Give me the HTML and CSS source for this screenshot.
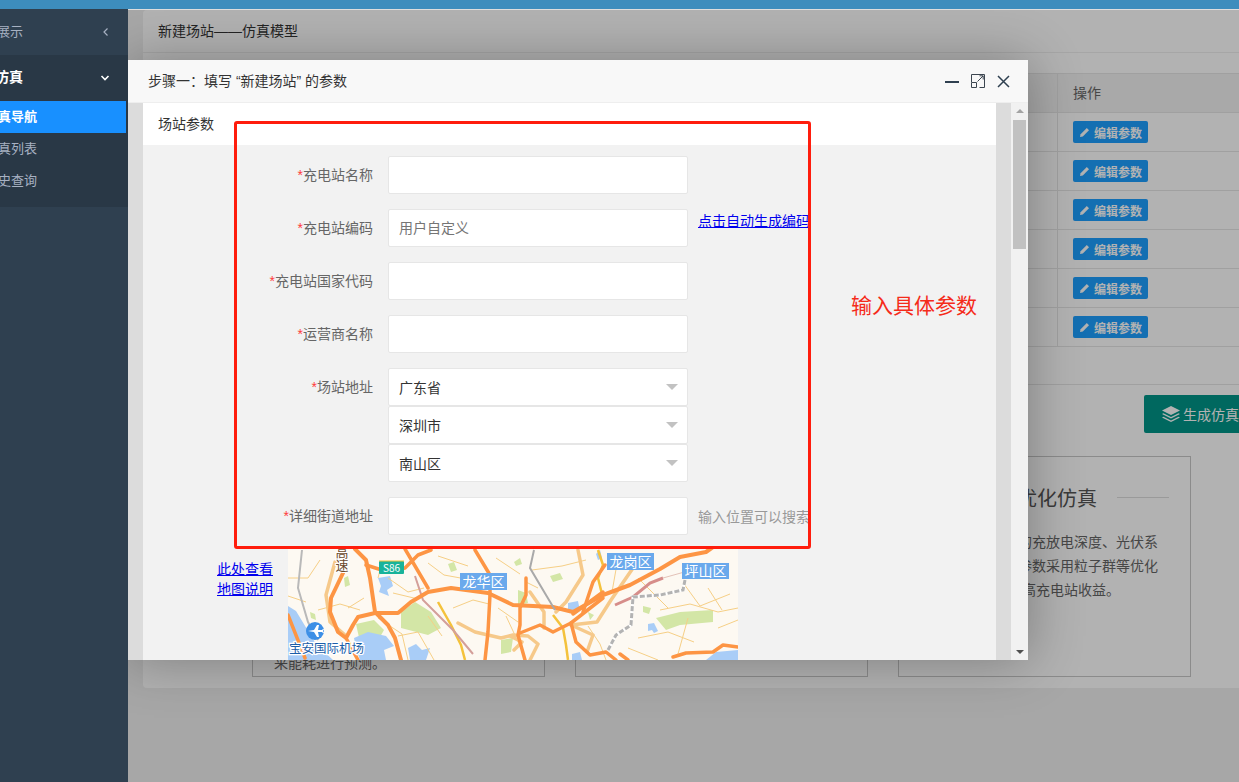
FILE: index.html
```html
<!DOCTYPE html>
<html lang="zh">
<head>
<meta charset="utf-8">
<title>新建场站——仿真模型</title>
<link rel="stylesheet" href="styles.css">
</head>
<body>
<div class="topbar"></div>
<div class="app">
  <aside class="sidebar">
    <div class="nav-item"><span class="nav-label">数据展示</span>
      <svg class="chev" width="8" height="10" viewBox="0 0 8 10"><path d="M5.500 1.500 2 5l3.500 3.500" fill="none" stroke="#a7b1c2" stroke-width="1.200"/></svg>
    </div>
    <div class="nav-group">
      <div class="nav-item nav-open"><span class="nav-label">优化仿真</span>
        <svg class="chev" width="10" height="8" viewBox="0 0 10 8"><path d="M1.500 2 5 5.500 8.500 2" fill="none" stroke="#fff" stroke-width="1.600"/></svg>
      </div>
      <div class="sub-item sub-active"><span class="sub-label">仿真导航</span></div>
      <div class="sub-item"><span class="sub-label">仿真列表</span></div>
      <div class="sub-item"><span class="sub-label">历史查询</span></div>
    </div>
  </aside>

  <main class="main">
    <section class="panel">
      <header class="panel-head">新建场站——仿真模型</header>
      <div class="table">
        <div class="row row-head"><div class="cell-blank"></div><div class="cell-op"><span class="op-title">操作</span></div></div>
        <div class="row"><div class="cell-blank"></div><div class="cell-op"><a class="btn-edit"><svg width="11" height="11" viewBox="0 0 11 11"><path d="M1 10l.6-2.800L7.800 1l2.200 2.200L3.800 9.400z"/></svg>编辑参数</a></div></div>
        <div class="row"><div class="cell-blank"></div><div class="cell-op"><a class="btn-edit"><svg width="11" height="11" viewBox="0 0 11 11"><path d="M1 10l.6-2.800L7.800 1l2.200 2.200L3.800 9.400z"/></svg>编辑参数</a></div></div>
        <div class="row"><div class="cell-blank"></div><div class="cell-op"><a class="btn-edit"><svg width="11" height="11" viewBox="0 0 11 11"><path d="M1 10l.6-2.800L7.800 1l2.200 2.200L3.800 9.400z"/></svg>编辑参数</a></div></div>
        <div class="row"><div class="cell-blank"></div><div class="cell-op"><a class="btn-edit"><svg width="11" height="11" viewBox="0 0 11 11"><path d="M1 10l.6-2.800L7.800 1l2.200 2.200L3.800 9.400z"/></svg>编辑参数</a></div></div>
        <div class="row"><div class="cell-blank"></div><div class="cell-op"><a class="btn-edit"><svg width="11" height="11" viewBox="0 0 11 11"><path d="M1 10l.6-2.800L7.800 1l2.200 2.200L3.800 9.400z"/></svg>编辑参数</a></div></div>
        <div class="row"><div class="cell-blank"></div><div class="cell-op"><a class="btn-edit"><svg width="11" height="11" viewBox="0 0 11 11"><path d="M1 10l.6-2.800L7.800 1l2.200 2.200L3.800 9.400z"/></svg>编辑参数</a></div></div>
      </div>
      <div class="table-foot"></div>
      <div class="toolbar">
        <a class="btn-gen">
          <svg width="20" height="18" viewBox="0 0 20 18"><path d="M10 1 19 5.500 10 10 1 5.500z"/><path d="M2.500 8.200 10 12l7.500-3.800L19 9l-9 4.500L1 9z"/><path d="M2.500 11.700 10 15.500l7.500-3.800L19 12.500 10 17l-9-4.500z"/></svg>
          生成仿真
        </a>
      </div>
      <div class="cards">
        <article class="card card-end"><p class="card-line">来能耗进行预测。</p></article>
        <article class="card"></article>
        <article class="card">
          <div class="card-title"><h3>优化仿真</h3><span class="title-rule"></span></div>
          <p class="card-line">可优化储能系统的充放电深度、光伏系</p>
          <p class="card-line">数、储能容量等参数采用粒子群等优化</p>
          <p class="card-line">算法进行求解,提高充电站收益。</p>
        </article>
      </div>
    </section>
    <div class="shade"></div>
  </main>
</div>

<div class="modal">
  <header class="modal-head">
    <span class="modal-title">步骤一&#xFF1A;填写 “新建场站” 的参数</span>
    <div class="modal-tools">
      <svg width="14" height="14" viewBox="0 0 14 14"><path d="M0 8h14" stroke="#2f4050" stroke-width="2"/></svg>
      <svg width="14" height="14" viewBox="0 0 14 14" fill="none" stroke="#3c4650"><path d="M6 .5h7.500V13.500H8.500M.5 8V.5H6" /><path d="M.5 8.500h5v5h-5zM6.500 7.500 12 2M8.500 1.800h3.700v3.700"/></svg>
      <svg width="13" height="13" viewBox="0 0 13 13"><path d="M1 1l11 11M12 1 1 12" stroke="#2f4050" stroke-width="1.500"/></svg>
    </div>
  </header>
  <div class="modal-body">
    <div class="modal-scroll">
      <div class="sheet">
        <div class="tab-band">场站参数</div>
        <form class="form">
          <div class="form-row"><label class="form-label"><i>*</i>充电站名称</label><input class="field" type="text"></div>
          <div class="form-row"><label class="form-label"><i>*</i>充电站编码</label><input class="field" type="text" placeholder="用户自定义"><a class="link link-top" href="#">点击自动生成编码</a></div>
          <div class="form-row"><label class="form-label"><i>*</i>充电站国家代码</label><input class="field" type="text"></div>
          <div class="form-row"><label class="form-label"><i>*</i>运营商名称</label><input class="field" type="text"></div>
          <div class="form-row form-row-top">
            <label class="form-label"><i>*</i>场站地址</label>
            <div class="selects">
              <div class="select">广东省<span class="caret"></span></div>
              <div class="select">深圳市<span class="caret"></span></div>
              <div class="select">南山区<span class="caret"></span></div>
            </div>
          </div>
          <div class="form-row form-row-last"><label class="form-label"><i>*</i>详细街道地址</label><input class="field" type="text"><span class="hint">输入位置可以搜索</span></div>
          <div class="map-row">
            <div class="map-links"><a class="link" href="#">此处查看</a><a class="link" href="#">地图说明</a></div>
            <svg class="map" width="450" height="112" viewBox="0 0 450 112">
              <rect width="450" height="112" fill="#fdf9f2"/>
              <g fill="#d3e6a6">
                <path d="M113 64l14-10 16 10 10 16-13 7-27-7z"/>
                <path d="M368 70l24-6 33-2v12l-33 3-14 5z"/>
                <path d="M68 76l18-4 10 10-8 14-16-2z"/>
                <path d="M160 16l6-2 3 8-6 2zM226 14l6-4 2 6-6 2zM262 28l10-3 3 6-10 3zM300 64l6 3-4 5z"/>
                <path d="M56 30l4-2 2 9-5 2zM22 64l5 2 1 6-5-2zM230 42l8 3 2 10-10 2zM355 58l8 2-2 6-6-2zM213 92l12-2-2 14-10 2z"/>
              </g>
              <g fill="#a9cdf7">
                <path d="M0 58l8 5 20 33 17 16H0z"/>
                <path d="M90 30l12-2 3 10-6 4 2 6-10-4 2-6z"/>
                <path d="M66 90l14-6 18 4 8 10-10 4 2 10H72l-4-12z"/>
                <path d="M120 100l8-4 6 6 8-2-4 12h-16z"/>
                <path d="M280 55l10-2 2 10-6 4-6-4z"/>
                <path d="M360 76l6-1 4 8-4 2-2-3-4 1z"/>
                <path d="M428 104l22-2v10h-32z"/>
                <path d="M308 6l4-4 2 8-4 2zM284 106l8-2 2 8h-10z"/>
              </g>
              <g fill="none" stroke="#f6cf86" stroke-width="1" stroke-linejoin="round">
                <path d="M0 30h20l12-18M30 62l22-6 20 6M100 30l20 14 16-4M140 15l16 12 22 4M165 60l20-8 16 4M90 70l24 16 6 26"/>
                <path d="M208 10l24 16M244 22l30-4 24-6M330 10l-6 34M250 40l-12-6M372 62l30-6 28 8 20-4M420 40l14 22M396 36l16 22 30-12M350 90l30-6 26 10"/>
                <path d="M300 78l12 18 6 16M110 88l20-4 16 28M140 68l14 20M218 68l14 30M90 30l4-16M105 45l25 6M0 48l18 6M150 8l30 10M60 60l16-10M210 60l20 14M350 30l30 30M400 70l-10 36M430 80l20-8M340 100l30 12"/>
              </g>
              <g fill="none" stroke="#f6c98a" stroke-width="3.500" stroke-linejoin="round" stroke-linecap="round">
                <path d="M47 14 38 47l4 27 15 13"/>
                <path d="M170 75l17 9 26 6 12-3 15 1 10 8-8 16"/>
                <path d="M290 2l5 25-17 27-10 10M242 44l14 20v16M283 77l22 10-6 17"/>
                <path d="M345 20l-22 32-14 22-26 3"/>
                <path d="M222 88l12 6-8 8"/>
              </g>
              <g fill="none" stroke="#f4c23c" stroke-width="2.500" stroke-linejoin="round">
                <path d="M150 54l13 23 10 20 4 15"/>
                <path d="M310 2l5 15-5 13 5 20"/>
                <path d="M265 67l10 13 3 17 2 15"/>
              </g>
              <path d="M127 28l8 24 30 30 20 24" fill="none" stroke="#d49f9a" stroke-width="2"/>
              <path d="M327 57l18-8 17-14 13-5" fill="none" stroke="#d68d8a" stroke-width="3"/>
              <path d="M375 30l50-14" fill="none" stroke="#e3c2b8" stroke-width="1"/>
              <g fill="none" stroke="#fd9544" stroke-linejoin="round" stroke-linecap="round">
                <path stroke-width="4" d="M67 1l11 11 4 18 5 34 13 13 7 13 6 22"/>
                <path stroke-width="4" d="M55 25 43 50l-1 14 8 20 8 6 7-13 5-8 17-4h23l13-11 17-10 23-4 37 5 25 12 40 2 20 5 30-17 27-10 30-16 20-12 26-5 7-5"/>
                <path stroke-width="3.500" d="M117 1l23 39M78 17l22 7 17-4 13-13 13-5"/>
                <path stroke-width="3.500" d="M187 2l15 25v20l-2 37-3 28"/>
                <path stroke-width="3.500" d="M58 90l12 22M0 67l17 43"/>
                <path stroke-width="3.500" d="M238 30v17l-6 13v17l-2 10 7 25"/>
                <path stroke-width="3.500" d="M232 85l20-8 13 7 18-9 32-25M285 66l30-22"/>
                <path stroke-width="3.500" d="M283 75l5 19 14 13 16-3 10 8"/>
                <path stroke-width="3.500" d="M317 17l-12 17-10 30"/>
                <path stroke-width="3.500" d="M385 109l13-4 27-1 10-7 15 2M340 112l-8-6"/>
              </g>
              <path d="M14 2 10 40l10 34 10 18" fill="none" stroke="#b9b9b9" stroke-width="2"/>
              <path d="M246 2l-4 18 16 27 9 15" fill="none" stroke="#a9a9a9" stroke-width="2"/>
              <path d="M397 32l-2 10-23 5-27 2-2 28-15 10-8 15" fill="none" stroke="#fff" stroke-width="3"/>
              <path d="M397 32l-2 10-23 5-27 2-2 28-15 10-8 15" fill="none" stroke="#b3b3b3" stroke-width="3" stroke-dasharray="5 2"/>
              <circle cx="27" cy="83" r="9" fill="#3d8fe6"/>
              <path d="M20 83l6-1 3-5h2l-1 5 4 0 1-1h1l-1 2 1 2h-1l-1-1-4 0 1 5h-2l-3-5-6-1z" fill="#fff"/>
              <rect x="91" y="13" width="25" height="13" rx="1" fill="#19b39a"/>
              <path d="M91 13h25" stroke="#f4c23c" stroke-width="1"/>
              <text class="map-shield" x="103.500" y="23.500">S86</text>
              <text class="map-poi-brown" x="54" y="9">高</text>
              <text class="map-poi-brown" x="54" y="22">速</text>
              <rect x="172" y="25" width="47" height="17" fill="#6aa9ec"/>
              <text class="map-district" x="195.500" y="38.500">龙华区</text>
              <rect x="319" y="5" width="47" height="17" fill="#6aa9ec"/>
              <text class="map-district" x="342.500" y="18.500">龙岗区</text>
              <rect x="394" y="15" width="47" height="16" fill="#6aa9ec"/>
              <text class="map-district" x="417.500" y="28">坪山区</text>
              <text class="map-poi" x="1" y="105">宝安国际机场</text>
            </svg>
          </div>
        </form>
      </div>
    </div>
    <div class="scrollbar">
      <span class="sb-up"></span>
      <span class="sb-thumb"></span>
      <span class="sb-down"></span>
    </div>
  </div>
</div>

<div class="callout-box"></div>
<div class="callout-text">输入具体参数</div>
</body>
</html>
```

FILE: styles.css
```css
* { box-sizing: border-box; }
html, body { height: 100%; }
body {
  margin: 0;
  overflow: hidden;
  position: relative;
  width: 1239px;
  height: 782px;
  font-family: "Liberation Sans", "Noto Sans CJK SC", sans-serif;
  font-size: 14px;
  color: #333;
  display: flex;
  flex-direction: column;
}
p, h3 { margin: 0; font-weight: normal; }

.topbar { height: 9px; background: #3d8dbd; flex: none; position: relative; z-index: 5; }
.app { flex: 1; display: flex; min-height: 0; }

/* sidebar */
.sidebar {
  width: 128px; flex: none; background: #2f4050; overflow: hidden;
  position: relative; z-index: 4;
}
.nav-item {
  height: 46px; display: flex; align-items: center; justify-content: space-between;
  padding-right: 18px; color: #a7b1c2; font-size: 13px;
}
.nav-label { margin-left: -29px; margin-top: -4px; white-space: nowrap; }
.chev { flex: none; }
.nav-group { background: #293846; height: 152px; }
.nav-open { color: #fff; font-weight: bold; font-size: 14px; }
.nav-open .nav-label { margin-left: -33px; }
.sub-item {
  height: 32px; display: flex; align-items: center; color: #a7b1c2; font-size: 13px;
  white-space: nowrap; width: 126px;
}
.sub-label { margin-left: -15px; margin-top: -4px; }
.sub-active { background: #1890ff; color: #fff; font-weight: bold; }

/* page under the dialog */
.main {
  flex: 1; min-width: 0; position: relative; overflow: hidden;
  background: #f0f0f0; border-top: 1px solid #dedede; padding-left: 15px;
}
.shade { position: absolute; inset: 0; background: rgba(0, 0, 0, .3); }
.panel { width: 1110px; background: #fff; border-radius: 4px; padding-bottom: 11px; }
.panel-head {
  height: 43px; line-height: 42px; padding-left: 15px; border-bottom: 1px solid #eee; color: #333;
}
.table { margin: 20px 0 0 15px; border-top: 1px solid #e6e6e6; }
.row { display: flex; height: 39px; border-bottom: 1px solid #e6e6e6; }
.row-head { background: #f2f2f2; }
.cell-blank { width: 899px; flex: none; }
.cell-op {
  flex: 1; border-left: 1px solid #e6e6e6; padding-left: 15px;
  display: flex; align-items: center; color: #666;
}
.op-title { margin-top: -3px; }
.btn-edit {
  width: 75px; height: 22px; background: #1e9fff; color: #fff; border-radius: 2px;
  font-size: 12px; font-weight: bold; display: flex; align-items: center; justify-content: center; gap: 4px;
}
.btn-edit svg { fill: #fff; }
.table-foot { height: 38px; border-bottom: 1px solid #e6e6e6; }
.toolbar { padding: 10px 0 0 1001px; }
.btn-gen {
  display: flex; align-items: center; width: 140px; height: 38px; background: #009688; color: #fff;
  border-radius: 2px; padding-left: 17px; gap: 2px; white-space: nowrap;
}
.btn-gen svg { fill: #fff; }
.cards { display: flex; gap: 30px; margin: 23px 0 0 109px; }
.card {
  width: 293px; height: 221px; border: 1px solid #c8c8c8; padding: 0 21px;
  display: flex; flex-direction: column; background: #fff;
}
.card-end { justify-content: flex-end; }
.card-end .card-line { margin-bottom: 1px; }
.card-title { height: 73px; display: flex; align-items: center; justify-content: flex-end; padding-top: 7px; }
.card-title h3 { font-size: 20px; color: #555; }
.title-rule { width: 52px; height: 1px; background: #ddd; margin-left: 20px; }
.card-line { font-size: 14px; line-height: 24px; color: #666; white-space: nowrap; }

/* dialog */
.modal {
  position: absolute; left: 128px; top: 60px; width: 900px; height: 600px; z-index: 3;
  display: flex; flex-direction: column; background: #fff;
  box-shadow: 1px 1px 50px rgba(0, 0, 0, .3);
}
.modal-head {
  height: 43px; flex: none; background: #f8f8f8; border-bottom: 1px solid #eee;
  display: flex; align-items: center; justify-content: space-between; padding-left: 20px;
}
.modal-title { color: #333; margin-top: -2px; }
.modal-tools { display: flex; align-items: center; gap: 12px; padding-right: 18px; }
.modal-body { flex: 1; min-height: 0; display: flex; }
.modal-scroll { flex: 1; min-width: 0; overflow: hidden; background: #dcdcdc; padding: 0 15px; }
.sheet { background: #f2f2f2; min-height: 100%; }
.tab-band { height: 42px; line-height: 42px; padding-left: 15px; background: #fff; color: #333; }
.form { padding-top: 11px; }
.form-row { display: flex; align-items: center; margin-bottom: 15px; }
.form-row-top { align-items: flex-start; }
.form-row-last { margin-bottom: 13px; }
.form-label {
  width: 245px; flex: none; padding-right: 15px; text-align: right; color: #666; line-height: 38px; white-space: nowrap;
}
.form-label i { color: #ff3b3b; font-style: normal; }
.field {
  width: 300px; height: 38px; flex: none; border: 1px solid #e6e6e6; border-radius: 2px;
  background: #fff; padding: 0 10px; font: inherit; outline: none;
}
.field::placeholder { color: #757575; opacity: 1; }
.link { color: #0000ee; text-decoration: underline; white-space: nowrap; }
.link-top { margin-left: 10px; align-self: flex-start; line-height: 24px; }
.hint { margin-left: 10px; color: #999; white-space: nowrap; }
.selects { display: flex; flex-direction: column; }
.select {
  width: 300px; height: 38px; border: 1px solid #e6e6e6; border-radius: 2px; background: #fff;
  display: flex; align-items: center; justify-content: space-between; padding: 0 9px 0 10px; color: #333;
}
.caret { width: 0; height: 0; border: 6px solid transparent; border-top: 6px solid #c2c2c2; border-bottom: 0; }
.map-row { display: flex; }
.map-links {
  width: 130px; flex: none; display: flex; flex-direction: column; align-items: flex-end;
  padding-top: 11px; line-height: 20px;
}
.map { margin-left: 15px; flex: none; display: block; }
.map text { font-family: "Noto Sans CJK SC", sans-serif; }
.map-district { font-size: 14px; fill: #fff; text-anchor: middle; }
.map-shield { font-size: 10px; fill: #fff; text-anchor: middle; }
.map-poi { font-size: 12.500px; fill: #1a5ea8; stroke: #fff; stroke-width: 2.500px; paint-order: stroke; }
.map-poi-brown { font-size: 13px; fill: #6b4a2c; text-anchor: middle; stroke: #fff; stroke-width: 2px; paint-order: stroke; }

.scrollbar {
  width: 17px; flex: none; background: #f1f1f1;
  display: flex; flex-direction: column; align-items: center; padding: 6px 0;
}
.sb-up { width: 0; height: 0; border: 4px solid transparent; border-bottom: 4px solid #a3a3a3; border-top: 0; }
.sb-thumb { width: 13px; height: 129px; background: #c1c1c1; margin-top: 7px; flex: none; }
.sb-down { width: 0; height: 0; border: 4px solid transparent; border-top: 4px solid #505050; border-bottom: 0; margin-top: auto; }

/* screenshot annotation */
.callout-box {
  position: absolute; left: 234px; top: 121px; width: 577px; height: 428px;
  border: 3px solid #ff1d0d; border-radius: 3px; z-index: 6;
}
.callout-text {
  position: absolute; left: 851px; top: 291px; z-index: 6;
  font-size: 21px; line-height: 30px; color: #f52b1a; white-space: nowrap;
}
```
